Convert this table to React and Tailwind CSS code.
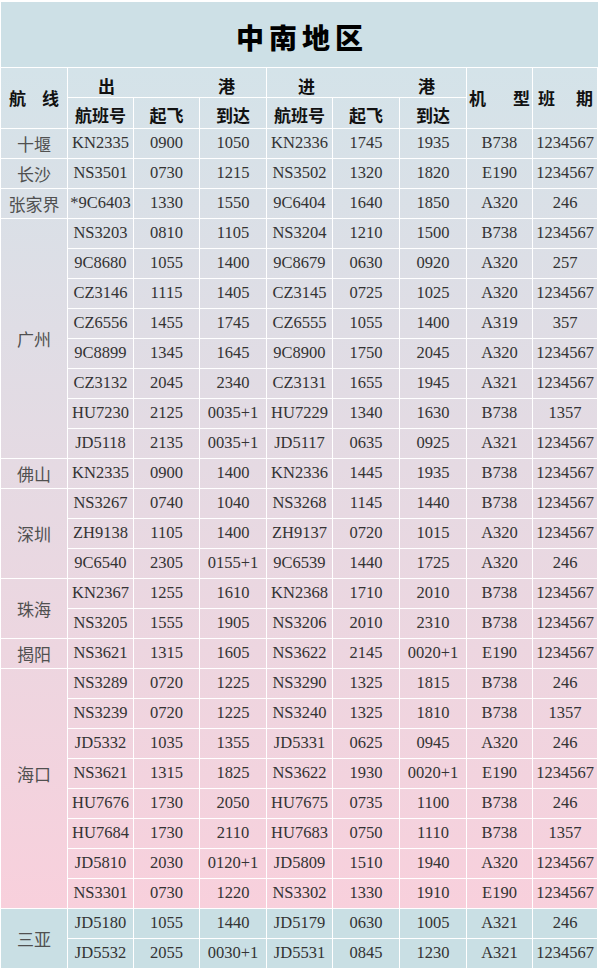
const groups = [
  { label: "十堰", rows: [["KN2335", "0900", "1050", "KN2336", "1745", "1935", "B738", "1234567"]] },
  { label: "长沙", rows: [["NS3501", "0730", "1215", "NS3502", "1320", "1820", "E190", "1234567"]] },
  { label: "张家界", rows: [["*9C6403", "1330", "1550", "9C6404", "1640", "1850", "A320", "246"]] },
  {
    label: "广州",
    rows: [
      ["NS3203", "0810", "1105", "NS3204", "1210", "1500", "B738", "1234567"],
      ["9C8680", "1055", "1400", "9C8679", "0630", "0920", "A320", "257"],
      ["CZ3146", "1115", "1405", "CZ3145", "0725", "1025", "A320", "1234567"],
      ["CZ6556", "1455", "1745", "CZ6555", "1055", "1400", "A319", "357"],
      ["9C8899", "1345", "1645", "9C8900", "1750", "2045", "A320", "1234567"],
      ["CZ3132", "2045", "2340", "CZ3131", "1655", "1945", "A321", "1234567"],
      ["HU7230", "2125", "0035+1", "HU7229", "1340", "1630", "B738", "1357"],
      ["JD5118", "2135", "0035+1", "JD5117", "0635", "0925", "A321", "1234567"],
    ],
  },
  { label: "佛山", rows: [["KN2335", "0900", "1400", "KN2336", "1445", "1935", "B738", "1234567"]] },
  {
    label: "深圳",
    rows: [
      ["NS3267", "0740", "1040", "NS3268", "1145", "1440", "B738", "1234567"],
      ["ZH9138", "1105", "1400", "ZH9137", "0720", "1015", "A320", "1234567"],
      ["9C6540", "2305", "0155+1", "9C6539", "1440", "1725", "A320", "246"],
    ],
  },
  {
    label: "珠海",
    rows: [
      ["KN2367", "1255", "1610", "KN2368", "1710", "2010", "B738", "1234567"],
      ["NS3205", "1555", "1905", "NS3206", "2010", "2310", "B738", "1234567"],
    ],
  },
  { label: "揭阳", rows: [["NS3621", "1315", "1605", "NS3622", "2145", "0020+1", "E190", "1234567"]] },
  {
    label: "海口",
    rows: [
      ["NS3289", "0720", "1225", "NS3290", "1325", "1815", "B738", "246"],
      ["NS3239", "0720", "1225", "NS3240", "1325", "1810", "B738", "1357"],
      ["JD5332", "1035", "1355", "JD5331", "0625", "0945", "A320", "246"],
      ["NS3621", "1315", "1825", "NS3622", "1930", "0020+1", "E190", "1234567"],
      ["HU7676", "1730", "2050", "HU7675", "0735", "1100", "B738", "246"],
      ["HU7684", "1730", "2110", "HU7683", "0750", "1110", "B738", "1357"],
      ["JD5810", "2030", "0120+1", "JD5809", "1510", "1940", "A320", "1234567"],
    ],
    noBottom: true,
  },
  { label: "", rows: [["NS3301", "0730", "1220", "NS3302", "1330", "1910", "E190", "1234567"]] },
  {
    label: "三亚",
    rows: [
      ["JD5180", "1055", "1440", "JD5179", "0630", "1005", "A321", "246"],
      ["JD5532", "2055", "0030+1", "JD5531", "0845", "1230", "A321", "1234567"],
    ],
    blue: true,
  },
];

const spanClass = {
  1: "",
  2: "row-span-2",
  3: "row-span-3",
  7: "row-span-7",
  8: "row-span-8",
};

const cjk = "font-['Noto_Sans_CJK_SC',sans-serif]";
const serif = "font-['Liberation_Serif','Noto_Sans_CJK_SC',serif]";

function Head({ className = "", children }) {
  return (
    <div
      className={`border-r border-b border-white flex items-center text-[17px] font-bold text-[#111] ${cjk} ${className}`}
    >
      {children}
    </div>
  );
}

export default function App() {
  return (
    <div className="w-[600px] h-[977px] bg-white pt-[2px] pl-[1px]">
      <div className="w-[597px]">
        <div className="h-[66px] bg-[#cde0e6] border-b border-white flex items-center justify-center pt-[4px]">
          <h1 className={`text-[28px] font-black tracking-[5px] pl-[5px] text-black ${cjk}`}>中南地区</h1>
        </div>
        <div className="grid grid-cols-[67px_66px_66px_67px_66px_67px_67px_66px_65px] grid-rows-[30px_31px] auto-rows-[30px] bg-[linear-gradient(180deg,#d4e3e9_0px,#f8d0dc_841px)]">
          <Head className="row-span-2 justify-between px-[8px]">
            <span>航</span>
            <span>线</span>
          </Head>
          <Head className="col-span-3 justify-between pl-[30px] pr-[31px] pt-[6px]">
            <span>出</span>
            <span>港</span>
          </Head>
          <Head className="col-span-3 justify-between pl-[31px] pr-[31px] pt-[6px]">
            <span>进</span>
            <span>港</span>
          </Head>
          <Head className="row-span-2 justify-between px-[2px]">
            <span>机</span>
            <span>型</span>
          </Head>
          <Head className="row-span-2 justify-between pl-[5px] pr-[4px]">
            <span>班</span>
            <span>期</span>
          </Head>
          {["航班号", "起飞", "到达", "航班号", "起飞", "到达"].map((t, i) => (
            <Head key={i} className="justify-center pt-[3px]">
              {t}
            </Head>
          ))}

          {groups.map((g, gi) => {
            const bg = g.blue ? "bg-[#c9dfe4]" : "";
            return [
              <div
                key={`l${gi}`}
                className={`${spanClass[g.rows.length]} ${g.noBottom ? "" : "border-b"} border-r border-white flex items-center justify-center text-[17px] text-[#505050] ${cjk} ${bg}`}
              >
                {g.label}
              </div>,
              ...g.rows.flatMap((r, ri) =>
                r.map((c, ci) => (
                  <div
                    key={`c${gi}-${ri}-${ci}`}
                    className={`${ci === 0 ? "col-start-2" : ""} border-r border-b border-white flex items-center justify-center text-[16.5px] text-[#333] ${serif} ${bg}`}
                  >
                    {c}
                  </div>
                ))
              ),
            ];
          })}
        </div>
      </div>
    </div>
  );
}
